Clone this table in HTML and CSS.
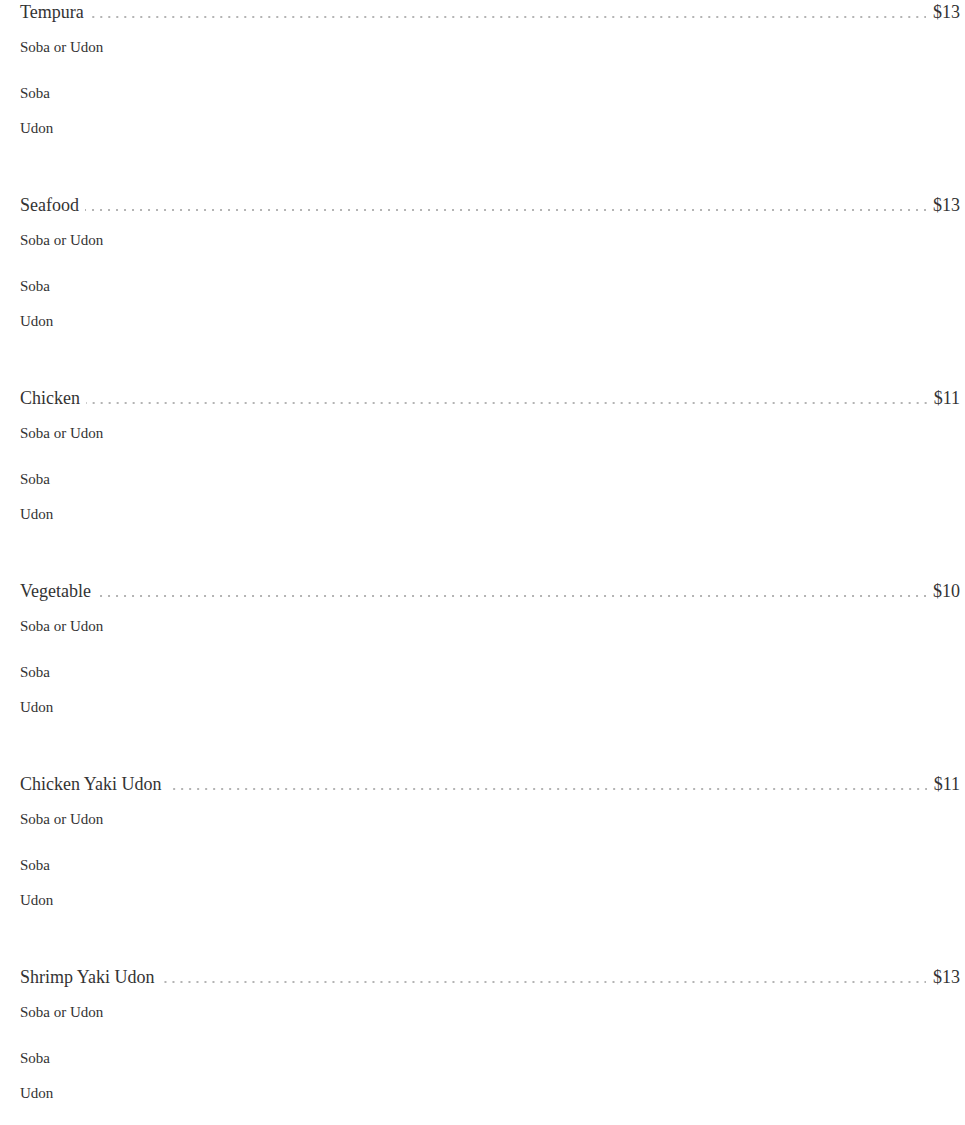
FILE: index.html
```html
<!DOCTYPE html>
<html>
<head>
<meta charset="utf-8">
<link rel="stylesheet" href="styles.css">
</head>
<body>
<div class="menu">
  <div class="item">
    <div class="row"><span class="name">Tempura</span><span class="leader"></span><span class="price">$13</span></div>
    <p class="desc">Soba or Udon</p>
    <ul class="options"><li>Soba</li><li>Udon</li></ul>
  </div>
  <div class="item">
    <div class="row"><span class="name">Seafood</span><span class="leader"></span><span class="price">$13</span></div>
    <p class="desc">Soba or Udon</p>
    <ul class="options"><li>Soba</li><li>Udon</li></ul>
  </div>
  <div class="item">
    <div class="row"><span class="name">Chicken</span><span class="leader"></span><span class="price">$11</span></div>
    <p class="desc">Soba or Udon</p>
    <ul class="options"><li>Soba</li><li>Udon</li></ul>
  </div>
  <div class="item">
    <div class="row"><span class="name">Vegetable</span><span class="leader"></span><span class="price">$10</span></div>
    <p class="desc">Soba or Udon</p>
    <ul class="options"><li>Soba</li><li>Udon</li></ul>
  </div>
  <div class="item">
    <div class="row"><span class="name">Chicken Yaki Udon</span><span class="leader"></span><span class="price">$11</span></div>
    <p class="desc">Soba or Udon</p>
    <ul class="options"><li>Soba</li><li>Udon</li></ul>
  </div>
  <div class="item">
    <div class="row"><span class="name">Shrimp Yaki Udon</span><span class="leader"></span><span class="price">$13</span></div>
    <p class="desc">Soba or Udon</p>
    <ul class="options"><li>Soba</li><li>Udon</li></ul>
  </div>
</div>
</body>
</html>
```
FILE: styles.css
```css
html, body {
  margin: 0;
  padding: 0;
  background: #fff;
}
body {
  font-family: "Liberation Serif", "Times New Roman", serif;
  color: #333;
}
.menu {
  padding: 0 5px 0 20px;
}
.item {
  height: 193px;
}
.row {
  display: flex;
  align-items: flex-end;
  font-size: 18px;
  line-height: 24px;
  height: 24px;
}
.name {
  white-space: nowrap;
}
.leader {
  flex: 1;
  height: 2px;
  margin: 0 7px 6px 6px;
  background-image: linear-gradient(to right, transparent 6.5px, #b4b4b4 6.5px);
  background-size: 8px 1.5px;
  background-repeat: repeat-x;
  background-position: right center;
}
.price {
  white-space: nowrap;
}
.desc {
  margin: 12px 0 0;
  font-size: 15px;
  line-height: 22px;
}
.options {
  list-style: none;
  margin: 24px 0 0;
  padding: 0;
  font-size: 15px;
  line-height: 22px;
}
.options li + li {
  margin-top: 13px;
}
```
